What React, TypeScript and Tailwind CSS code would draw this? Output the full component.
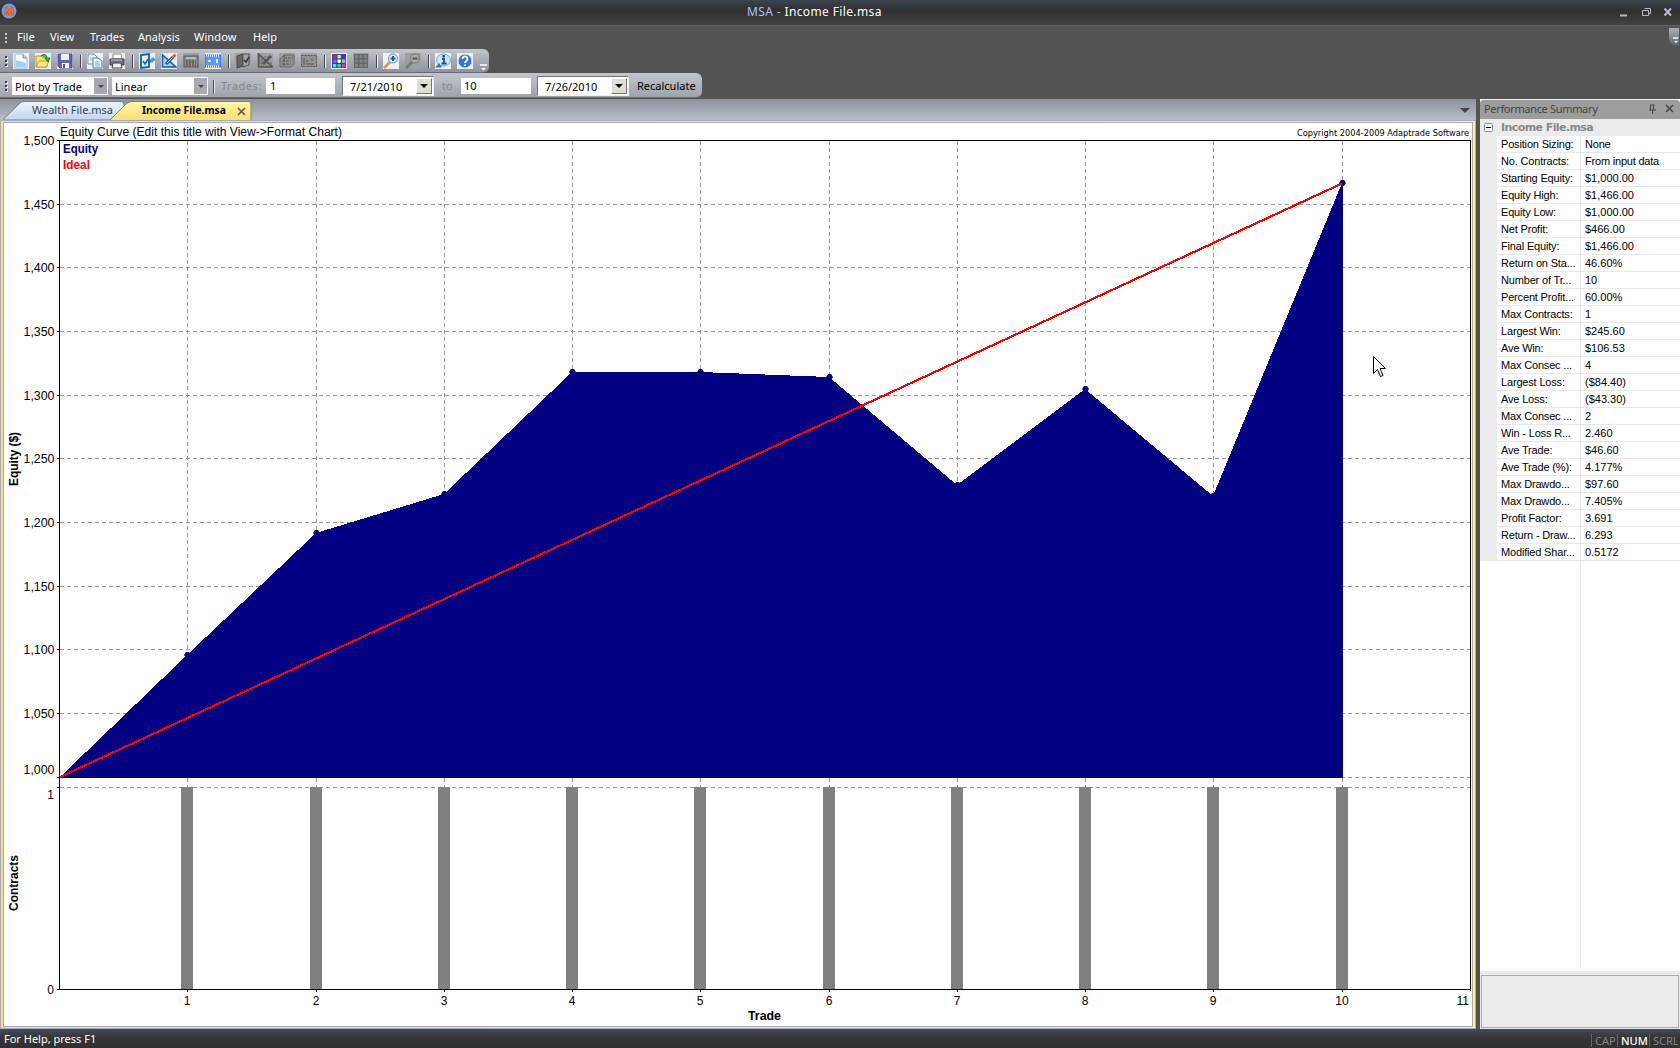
import React from "react";

type TP = { x: number; y: number; w?: number; children: string; cls?: string; anchor?: "start" | "middle" | "end"; size?: number; rot?: boolean };
const T = ({ x, y, w, children, cls = "", anchor = "start", size = 12, rot }: TP) => (
  <text x={x} y={y} textLength={w} textAnchor={anchor} fontSize={size} className={cls} lengthAdjust="spacingAndGlyphs" transform={rot ? `rotate(-90 ${x} ${y})` : undefined}>
    {children}
  </text>
);

const rows: [string, string][] = [
  ["Position Sizing:", "None"], ["No. Contracts:", "From input data"], ["Starting Equity:", "$1,000.00"], ["Equity High:", "$1,466.00"],
  ["Equity Low:", "$1,000.00"], ["Net Profit:", "$466.00"], ["Final Equity:", "$1,466.00"], ["Return on Sta...", "46.60%"],
  ["Number of Tr...", "10"], ["Percent Profit...", "60.00%"], ["Max Contracts:", "1"], ["Largest Win:", "$245.60"], ["Ave Win:", "$106.53"],
  ["Max Consec ...", "4"], ["Largest Loss:", "($84.40)"], ["Ave Loss:", "($43.30)"], ["Max Consec ...", "2"], ["Win - Loss R...", "2.460"],
  ["Ave Trade:", "$46.60"], ["Ave Trade (%):", "4.177%"], ["Max Drawdo...", "$97.60"], ["Max Drawdo...", "7.405%"], ["Profit Factor:", "3.691"],
  ["Return - Draw...", "6.293"], ["Modified Shar...", "0.5172"],
];

const equity: [number, number][] = [[60, 777], [187, 655], [316, 533], [444, 494], [572, 372], [700, 372], [829, 377], [957, 485], [1085, 389], [1213, 496], [1342, 183]];
const xs = [187, 316, 444, 572, 700, 829, 957, 1085, 1213, 1342];
const levels = ["1,500", "1,450", "1,400", "1,350", "1,300", "1,250", "1,200", "1,150", "1,100", "1,050", "1,000"];
const levelY = [140, 204, 267, 331, 395, 458, 522, 586, 649, 713, 777];

/* The view box starts at the chart's offset within the window. */
const Chart = () => (
  <svg width="1468" height="903" viewBox="4 123 1468 903" className="block bg-white font-['Liberation_Sans',sans-serif]" fill="#000">
    <g stroke="#999" strokeWidth="1" strokeDasharray="4 3" shapeRendering="crispEdges">
      {levelY.slice(1).map((y) => <line key={y} x1="60" x2="1470" y1={y + 0.5} y2={y + 0.5} />)}
      <line x1="60" x2="1470" y1="787.5" y2="787.5" />
      {xs.map((x) => <line key={x} x1={x + 0.5} x2={x + 0.5} y1="141" y2="788" />)}
    </g>
    <polygon points={equity.map((p) => p.join(",")).join(" ") + " 1343,183 1343,778 60,778"} fill="#000080" shapeRendering="crispEdges" />
    {equity.slice(1).map(([x, y]) => <polygon key={x} points={`${x - 3},${y} ${x - 1},${y - 3} ${x + 2},${y - 3} ${x + 4},${y} ${x + 2},${y + 3} ${x - 1},${y + 3}`} fill="#000080" />)}
    <line x1="60" y1="777" x2="1342" y2="183.500" stroke="#f00" strokeWidth="2.200" shapeRendering="crispEdges" />
    {xs.map((x) => <rect key={x} x={x - 6} y="787" width="12" height="202" fill="#808080" />)}
    <g fill="none" stroke="#000" shapeRendering="crispEdges">
      <path d="M57 140.500H1471M1470.500 140V991M57 989.500H1471M59.500 140V990M57 787.500H60" />
      <path d={levelY.map((y) => `M57 ${y + 0.5}H60`).join("")} />
      <path d={xs.map((x) => `M${x + 0.5} 989V992`).join("")} />
    </g>
    {levels.map((l, i) => <T key={l} x={54.500} y={i === 10 ? 774 : levelY[i] + 5} w={31} anchor="end">{l}</T>)}
    <T x={54} y={799} anchor="end">1</T>
    <T x={54} y={994} anchor="end">0</T>
    {xs.map((x, i) => <T key={x} x={x} y={1005} anchor="middle">{String(i + 1)}</T>)}
    <T x={1469} y={1005} anchor="end">11</T>
    <T x={60} y={136} w={282}>Equity Curve (Edit this title with View-&gt;Format Chart)</T>
    <T x={63} y={153} w={35} cls="font-bold fill-[#000080]">Equity</T>
    <T x={63} y={169} w={27} cls="font-bold fill-[#ff0000]">Ideal</T>
    <T x={1297} y={136} w={172} size={9} cls="font-['DejaVu_Sans_Condensed','DejaVu_Sans',sans-serif]">Copyright 2004-2009 Adaptrade Software</T>
    <T x={748} y={1020} w={33} cls="font-bold">Trade</T>
    <T x={18} y={486} w={54} cls="font-bold" rot>Equity ($)</T>
    <T x={18} y={911} w={56} cls="font-bold" rot>Contracts</T>
    <path d="M1373.500 356.500V373.500L1377.500 369.500L1380.500 376.500L1383 375.500L1380 368.500H1385.500Z" fill="#fff" stroke="#000" />
  </svg>
);

const Grip = () => (
  <div className="flex h-full w-[12px] shrink-0 flex-col items-center justify-center gap-[2px]">
    {[0, 1, 2].map((i) => <i key={i} className="block h-[2px] w-[2px] bg-[#333940] shadow-[1px_1px_0_#fff]" />)}
  </div>
);
const Sep = () => <i className="block h-[13px] w-px bg-[#44484d] shadow-[1px_0_0_#eee]" />;

const art: Record<string, React.ReactNode> = {
  new: <><path d="M2 1H10L14 5V15H2Z" fill="#fff" stroke="#9bb5d0" /><path d="M3 7L13 10V14H3Z" fill="#9fd0f8" /><path d="M10 1V5H14" fill="#b9dcf7" stroke="#668db5" /></>,
  open: <><path d="M1 14V3H6L8 5H12V14Z" fill="#f7e77a" stroke="#b79524" /><path d="M1 14L4 8H14L11 14Z" fill="#ffed77" stroke="#c49b24" /><path d="M6 3C9 0 12 2 12 5H10L13 9L15 5H13" fill="#40b637" stroke="#187526" /></>,
  save: <><path d="M1 1H15V15H3L1 13Z" fill="#6264bb" stroke="#4545a0" /><path d="M4 1H12V7H4Z" fill="#eef" /><path d="M5 10H12V15H5Z" fill="#fff" /><path d="M6 11H8V15H6Z" fill="#4949a0" /></>,
  copy: <><path d="M1 1H7L10 4V11H1Z" fill="#eef7ff" stroke="#6688b8" /><path d="M6 5H11L15 8V15H6Z" fill="#edf5ff" stroke="#5372a5" /><path d="M3 5H6M3 7H6M8 9H12M8 11H13M8 13H13" stroke="#8aa7cd" /></>,
  print: <><path d="M4 1H12L13 6H4Z" fill="#fff" stroke="#888" /><path d="M1 6H15V12H1Z" fill="#70727c" stroke="#363946" /><path d="M4 10H12L13 15H3Z" fill="#eee" stroke="#444" /><path d="M2 7H13" stroke="#ccd" /></>,
  check: <><path d="M2 2L10 1V14L2 15Z" fill="#e5f4ff" stroke="#145eaf" strokeWidth="1.800" /><path d="M4 8L6 11L9 6" fill="none" stroke="#1467bb" strokeWidth="1.500" /><path d="M9 10L12 8" stroke="#16509d" strokeWidth="1.500" /><path d="M11.500 8.500L15.500 5.500" stroke="#3f97e0" strokeWidth="3.500" /></>,
  draw: <><path d="M1.500 2V14H15Z" fill="#9dd4f8" stroke="#1559b0" strokeWidth="1.500" /><path d="M5 11L12 4" stroke="#244da5" strokeWidth="3" /><path d="M6 10L12 4" stroke="#b9e0ff" /><path d="M11.500 4.500L14.500 1.500" stroke="#e45b35" strokeWidth="3" /></>,
  calc: <><rect x="1" y="3" width="14" height="11" fill="#8c8c8c" stroke="#555" /><path d="M3 5H13" stroke="#ccc" strokeWidth="1.500" /><path d="M3 8H13M3 10H13M3 12H13" stroke="#444" strokeDasharray="2 1" /></>,
  ruler: <><rect x="0" y="2" width="16" height="12" fill="#5c9cf0" stroke="#2b61bd" /><path d="M1 2.500H15M1 13.500H15" stroke="#fff" strokeWidth="2" strokeDasharray="1 1" /><path d="M3 8H6M12 6V10" stroke="#fff" strokeWidth="1.500" /></>,
  book: <><path d="M2 3L8 1V13L2 15Z" fill="#666" stroke="#444" /><path d="M8 1L14 1V12L8 14Z" fill="#a5a5a5" stroke="#555" /><path d="M9 7L11 9L14 4" fill="none" stroke="#333" strokeWidth="1.500" /></>,
  gdraw: <><path d="M1.500 1V14H16Z" fill="#8a8a8a" stroke="#555" strokeWidth="1.500" /><path d="M1 4H15M1 7H12M1 10H15" stroke="#606060" strokeDasharray="2 1" /><path d="M6 11L14 3" stroke="#555" strokeWidth="2.500" /></>,
  glist: <><path d="M1 6L5 2H15V11L12 14H1Z" fill="#929292" stroke="#666" /><path d="M5 5H14M3 8H12M3 11H12M5 2V14" stroke="#555" strokeDasharray="3 1" /></>,
  gbox: <><rect x="0.500" y="2.500" width="15" height="11" fill="#929292" stroke="#555" strokeDasharray="2 1" /><path d="M3 5V12M5 8H7M10 7H12M5 11H13" stroke="#555" /></>,
  grid: <><rect x="1" y="1" width="14" height="14" fill="#234a9f" />{["#e22", "#fe3", "#33e", "#e2f", "#fff", "#bbb", "#2ef", "#3e3", "#e2e"].map((c, i) => <rect key={i} x={2 + (i % 3) * 4.500} y={2 + Math.floor(i / 3) * 4.500} width="3.300" height="3.300" fill={c} />)}</>,
  ggrid: <><rect x="1" y="1" width="14" height="14" fill="#666" />{Array.from({ length: 9 }, (_, i) => <rect key={i} x={2 + (i % 3) * 4.500} y={2 + Math.floor(i / 3) * 4.500} width="3" height="3" fill="#818181" />)}</>,
  zoomin: <><path d="M1 15L7 9" stroke="#e99a2f" strokeWidth="3" /><circle cx="10" cy="5.500" r="4.500" fill="#d6f0ff" stroke="#5893d1" /><path d="M10 3V8M7.500 5.500H12.500" stroke="#1459c1" strokeWidth="2" /></>,
  zoomout: <><path d="M1 15L7 9" stroke="#777" strokeWidth="3" /><circle cx="10" cy="5.500" r="4.500" fill="#aaa" stroke="#777" /><path d="M7.500 5.500H12.500" stroke="#555" strokeWidth="2" /></>,
  info: <><ellipse cx="8.500" cy="7" rx="7" ry="6" fill="#cfe9fc" stroke="#6da1d4" /><path d="M4 10L0 14.500H7Z" fill="#277bc5" /><path d="M7 6H9V10.500M6.500 10.500H11.500" fill="none" stroke="#164fa6" strokeWidth="1.800" /><rect x="7.500" y="2" width="2.500" height="2.500" fill="#164fa6" /></>,
  help: <><circle cx="8" cy="8" r="7" fill="#3673d4" stroke="#d8eaff" /><path d="M5.500 6C5.500 2.500 10.500 2.500 10.500 6C10.500 8 8 8 8 10" fill="none" stroke="#fff" strokeWidth="1.800" /><path d="M7 11.500H9V13H7Z" fill="#fff" /></>,
};
const grey = ["calc", "book", "gdraw", "glist", "gbox", "ggrid", "zoomout"];
const Icon = ({ n }: { n: string }) => (
  <span className={"flex h-4 w-4 shrink-0 " + (grey.includes(n) ? "bg-[#9c9fa3]" : "bg-[#edf1f7]")}><svg width="16" height="16" viewBox="0 0 16 16">{art[n]}</svg></span>
);
const Group = ({ names, w }: { names: string[]; w: string }) => <div className={"flex items-center justify-between " + w}>{names.map((n) => <Icon key={n} n={n} />)}</div>;

const Combo = ({ label, w }: { label: string; w: string }) => (
  <div className={"flex h-[18px] items-stretch bg-white " + w}>
    <span className="flex-1 pl-[3px] leading-[20px]">{label}</span>
    <span className="m-px flex w-[13px] items-center justify-center bg-[#a6a9b1]"><i className="border-x-[3px] border-t-[3px] border-x-transparent border-t-[#454545]" /></span>
  </div>
);
const DateBox = ({ label }: { label: string }) => (
  <div className="flex h-[20px] w-[92px] border border-t-[#77756b] border-l-[#77756b] border-r-[#eee] border-b-[#eee] bg-white">
    <span className="flex-1 pl-[7px] text-[11px] leading-[20px]">{label}</span>
    <span className="m-px flex w-[16px] items-center justify-center border border-t-white border-l-white border-r-[#77756b] border-b-[#77756b] bg-[#e0ddd2]"><i className="border-x-[4px] border-t-[4px] border-x-transparent border-t-black" /></span>
  </div>
);

export default function App() {
  return (
    <div className="flex h-[1048px] w-[1680px] flex-col overflow-hidden whitespace-nowrap bg-[#535353] font-['Noto_Sans',sans-serif] text-[11px]">
      <header className="flex h-[26px] shrink-0 items-center border-b border-[#626262] bg-linear-to-b from-[#3c4450] via-[#303030] via-40% to-[#424242] pl-[1px]">
        <svg width="16" height="16" viewBox="0 0 16 16" className="mb-[3px]"><circle cx="8" cy="8" r="7.500" fill="#789bdc" /><path d="M3.500 12L4.500 4H6.500L8 8L10 4H12L13 12H10.500V8L8.500 12H7.500L6 8V12Z" fill="#ff6a20" stroke="#b94d35" strokeWidth=".5" /></svg>
        <div className="mb-[1px] ml-[730px] text-[12px] tracking-[0.37px] text-white"><span className="text-[#acc4ef]">MSA - </span>Income File.msa</div>
        <svg width="56" height="12" viewBox="0 0 56 12" className="mr-[8px] mb-[2px] ml-auto" fill="none" stroke="#b5bdc9"><path d="M4 9.500H11" strokeWidth="2" /><path d="M28.500 2.500H34.500V7.500H32M26.500 4.500H32.500V9.500H26.500Z" /><path d="M48.500 2.500L55 9.500M55 2.500L48.500 9.500" strokeWidth="2" /></svg>
      </header>
      <nav className="flex h-[23px] shrink-0 items-center text-[11px] text-white">
        <div className="flex w-[12px] flex-col items-center gap-[2px]">{[0, 1, 2].map((i) => <i key={i} className="h-[2px] w-[2px] bg-[#ccc]" />)}</div>
        <div className="flex w-[268px] items-center pb-px pl-[5px]"><span className="w-[33px]">File</span><span className="w-[40px]">View</span><span className="w-[48px]">Trades</span><span className="w-[56px]">Analysis</span><span className="w-[59px] tracking-[0.15px]">Window</span><span>Help</span></div>
        <div className="mt-[2px] mr-[1px] mb-auto ml-auto h-[18px] w-[10px] rounded-bl-lg bg-linear-to-b from-[#aeb1b8] to-[#60636a]"><svg width="10" height="18" viewBox="0 0 10 18"><path d="M4 10H9" stroke="#fff" strokeWidth="1.500" /><path d="M5 13H9L7 15Z" fill="#fff" /></svg></div>
      </nav>
      <div className="flex h-[24px] w-[489px] shrink-0 items-center rounded-r-md border-b border-[#666a72] bg-linear-to-b from-[#c2c5cc] to-[#8e929c] pt-px">
        <Grip />
        <div className="flex h-full w-[461px] items-center justify-between pl-[1px]">
          <Group names={["new", "open", "save"]} w="w-[60px]" /><Sep /><Group names={["copy", "print"]} w="w-[38px]" /><Sep />
          <Group names={["check", "draw", "calc", "ruler"]} w="w-[82px]" /><Sep /><Group names={["book", "gdraw", "glist", "gbox"]} w="w-[82px]" /><Sep />
          <Group names={["grid", "ggrid"]} w="w-[38px]" /><Sep /><Group names={["zoomin", "zoomout"]} w="w-[38px]" /><Sep /><Group names={["info", "help"]} w="w-[38px]" />
        </div>
        <svg width="10" height="22" viewBox="0 0 10 22" className="ml-auto"><path d="M1 15H8" stroke="#fff" strokeWidth="1.500" /><path d="M2 18H7L4.500 20.500Z" fill="#fff" /></svg>
      </div>
      <div className="flex h-[25px] w-[702px] shrink-0 items-center rounded-r-md border-b border-[#666a72] bg-linear-to-b from-[#c2c5cc] to-[#9fa3ab] pt-[2px]">
        <Grip />
        <Combo label="Plot by Trade" w="w-[96px]" />
        <div className="w-[4px]" /><Combo label="Linear" w="w-[96px]" />
        <div className="w-[5px]" /><Sep />
        <span className="w-[52px] pl-[7px] tracking-[0.5px] text-[#85888e]">Trades:</span>
        <div className="h-[16px] w-[69px] bg-white pl-[4px] leading-[16px]">1</div>
        <div className="w-[7px]" /><DateBox label="7/21/2010" />
        <span className="w-[27px] pl-[8px] text-[#85888e]">to</span>
        <div className="h-[16px] w-[70px] bg-white pl-[3px] leading-[16px]">10</div>
        <div className="w-[6px]" /><DateBox label="7/26/2010" />
        <span className="pl-[8px]">Recalculate</span>
      </div>
      <main className="flex h-[931px] shrink-0 pt-px">
        <section className="flex w-[1476px] flex-col">
          <div className="flex h-[21px] items-end bg-linear-to-b from-[#8d939e] to-[#b9bdc4]">
            <svg width="260" height="19" viewBox="0 0 260 19" className="font-['Noto_Sans',sans-serif]">
              <defs><linearGradient id="a" x2="0" y2="1"><stop stopColor="#edf5fe" /><stop offset="1" stopColor="#c0d6f1" /></linearGradient><linearGradient id="b" x2="0" y2="1"><stop stopColor="#fff5a8" /><stop offset="1" stopColor="#ffdf73" /></linearGradient></defs>
              <path d="M3 18.500L19 3Q21 .5 24 .5H121Q124 .5 124 4V19H3" fill="url(#a)" stroke="#727d8d" />
              <path d="M110 19L126 3Q129 .5 132 .5H249Q251 .5 251 3V19" fill="url(#b)" stroke="#85806d" />
              <T x={32} y={13} w={81} size={11} cls="fill-[#354052]">Wealth File.msa</T>
              <T x={142} y={13} w={84} size={11} cls="font-bold">Income File.msa</T>
              <path d="M238 7L245 14M245 7L238 14" stroke="#555" strokeWidth="1.500" />
            </svg>
            <i className="mr-[6px] mb-[7px] ml-auto border-x-[5px] border-t-[5px] border-x-transparent border-t-[#454545]" />
          </div>
          <div className="flex h-[909px] border border-[#a5aab5] bg-[#ffe680] bg-linear-to-r from-[#ffdc7b] to-[#fff696] p-[2px] pt-px">
            <div className="h-[905px] w-[1470px] overflow-hidden border border-[#a5aab5] bg-white"><Chart /></div>
          </div>
        </section>
        <aside className="ml-[4px] flex w-[200px] flex-col bg-white">
          <div className="flex h-[20px] shrink-0 items-center rounded-t-sm border-t border-[#eee] bg-[#9d9d9d] pr-[6px] pl-[4px] text-[#444]">
            <span className="tracking-[-0.33px]">Performance Summary</span>
            <svg className="mb-px ml-auto" width="26" height="12" viewBox="0 0 26 12" fill="none" stroke="#444"><path d="M2.500 2V7M5.500 2V7M2 2H6.500M1 7H8M4.500 7V11" /><path d="M18 2L25 9M25 2L18 9" strokeWidth="1.500" /></svg>
          </div>
          <div className="flex h-[17px] shrink-0 items-center bg-[#ebebeb] pl-[4px] font-['DejaVu_Sans',sans-serif] font-bold text-[#888]">
            <svg width="9" height="9"><rect x=".5" y=".5" width="8" height="8" rx="1" fill="#fff" stroke="#8192a5" /><path d="M2 4.500H7" stroke="#000" /></svg>
            <span className="ml-[8px] pt-px text-[11px] tracking-[-0.58px]">Income File.msa</span>
          </div>
          <div className="shrink-0 font-['Liberation_Sans',sans-serif] text-[11px] text-black">
            {rows.map(([a, b], i) => (
              <div key={i} className="flex h-[17px] leading-[17px]">
                <span className="w-[17px] bg-[#ebebeb]" />
                <span className="w-[84px] overflow-hidden border-r border-b border-[#e8e8e8] pl-[4px] tracking-[-0.17px]">{a}</span>
                <span className={"flex-1 border-b border-[#e8e8e8] pl-[4px] " + (i < 2 ? "tracking-[-0.2px]" : "")}>{b}</span>
              </div>
            ))}
          </div>
          <div className="ml-[17px] w-[84px] flex-1 border-r border-[#e8e8e8]" />
          <div className="mt-[3px] h-[58px] shrink-0 bg-[#ebebeb] px-[1px] pt-[4px] pb-[1px]"><div className="h-full border border-[#aaa]" /></div>
        </aside>
      </main>
      <footer className="flex h-[19px] shrink-0 items-center bg-linear-to-b from-[#454b57] via-[#343434] via-50% to-[#303030] pl-[4px] text-[11px] text-white">
        <span className="pt-[2px]">For Help, press F1</span>
        <div className="ml-auto flex pt-[3px] leading-[13px] text-[#858585]"><span className="w-[26px] border-l border-[#666] pl-[3px]">CAP</span><span className="w-[32px] border-l border-[#666] pl-[3px] font-medium text-white">NUM</span><span className="w-[31px] border-l border-[#666] pl-[3px]">SCRL</span></div>
      </footer>
    </div>
  );
}
